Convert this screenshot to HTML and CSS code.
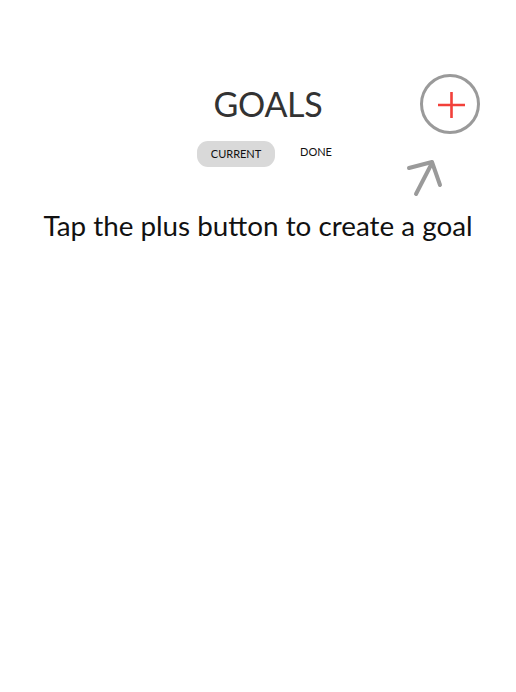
FILE: index.html
```html
<!DOCTYPE html>
<html>
<head>
<meta charset="utf-8">
<link rel="stylesheet" href="styles.css">
</head>
<body>
<div class="screen">
  <header class="header">
    <h1 class="title">GOALS</h1>
    <div class="tabs">
      <span class="tab tab-active">CURRENT</span>
      <span class="tab">DONE</span>
    </div>
    <button class="add-btn" aria-label="Add goal">
      <svg width="64" height="64" viewBox="0 0 64 64">
        <circle cx="32" cy="32" r="28.5" fill="none" stroke="#9a9a9a" stroke-width="3"/>
        <path d="M20 33H47M33.5 20V46" stroke="#f2403a" stroke-width="2.6" fill="none"/>
      </svg>
    </button>
    <svg class="hint-arrow" width="44" height="44" viewBox="0 0 44 44">
      <path d="M10 38L26 7M3 12L26 6L34 29" stroke="#9a9a9a" stroke-width="4" fill="none" stroke-linecap="round" stroke-linejoin="round"/>
    </svg>
  </header>
  <p class="hint">Tap the plus button to create a goal</p>
</div>
</body>
</html>
```
FILE: styles.css
```css
* { box-sizing: border-box; }
html, body { margin: 0; padding: 0; background: #fff; }
body { font-family: Lato, "Noto Sans", sans-serif; color: #111; }
.screen { width: 516px; height: 692px; }
.header {
  position: relative;
  display: flex;
  flex-direction: column;
  align-items: center;
  padding: 83px 0 0 20px;
}
.title {
  margin: 0;
  font-weight: 400;
  font-size: 34px;
  line-height: 42px;
  color: #333;
  letter-spacing: -0.3px;
}
.tabs {
  display: flex;
  align-items: center;
  gap: 12px;
  margin-top: 16px;
  margin-left: 6px;
}
.tab {
  font-size: 11px;
  color: #111;
  padding: 0 13px;
  height: 26px;
  line-height: 26px;
  border-radius: 11px;
}
.tab:last-child { line-height: 22px; align-self: flex-start; }
.tab-active { background: #d9d9d9; width: 78px; text-align: center; padding: 0; }
.add-btn {
  position: absolute;
  left: 418px;
  top: 72px;
  width: 64px;
  height: 64px;
  padding: 0;
  border: 0;
  background: none;
}
.add-btn svg { display: block; }
.hint-arrow { position: absolute; left: 406px; top: 156px; }
.hint {
  margin: 42px 0 0;
  text-align: center;
  font-size: 27.8px;
  line-height: 34px;
  color: #111;
}
```
